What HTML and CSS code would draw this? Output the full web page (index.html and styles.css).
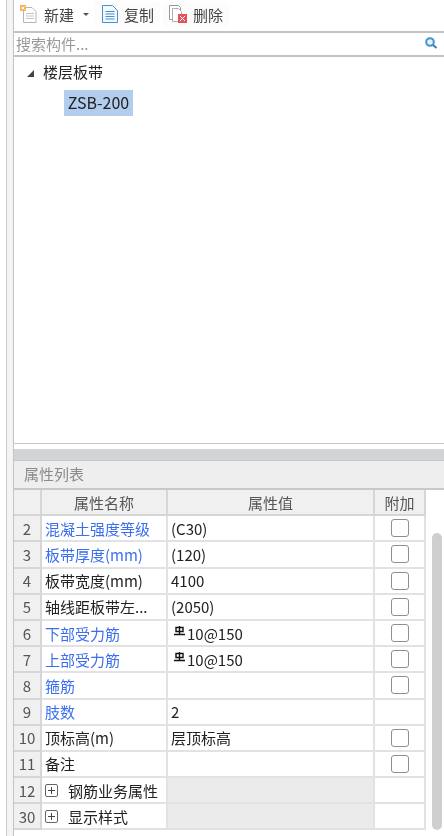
FILE: index.html
```html
<!DOCTYPE html>
<html lang="zh-CN">
<head>
    <meta charset="UTF-8">
    <title>属性列表</title>
    <link rel="stylesheet" href="styles.css">
</head>
<body>
<div class="app">
    <div class="side"></div>
    <div class="main">
        <!--工具栏-->
        <div class="toolbar">
            <div class="tool tool-new">
                <svg width="18" height="18" viewBox="0 0 18 18">
                    <path d="M3.500 2.500h8.500l4 4v11h-12.500z" fill="#fff" stroke="#b5b5b5"/>
                    <path d="M6 8.500h8M6 11h8M6 13.500h8" stroke="#c4c4c4"/>
                    <rect x="0" y="0" width="6" height="6" fill="#f7b35c"/>
                    <path d="M1.500 1.500l3 3M4.500 1.500l-3 3" stroke="#fff"/>
                </svg>
                <span>新建</span>
                <i class="caret"></i>
            </div>
            <div class="tool tool-copy">
                <svg width="16" height="18" viewBox="0 0 16 18">
                    <path d="M0.500 0.500h10l5 5v12h-15z" fill="#f3f8fd" stroke="#4a8fd0"/>
                    <path d="M3.500 6.500h9M3.500 9h9M3.500 11.500h9M3.500 14h9" stroke="#4a8fd0"/>
                </svg>
                <span>复制</span>
            </div>
            <div class="tool tool-del">
                <svg width="18" height="18" viewBox="0 0 18 18">
                    <path d="M0.500 0.500h9l2 2v12h-11z" fill="#fff" stroke="#9a9a9a"/>
                    <path d="M3.500 3.500h6l3 3v10h-9z" fill="#fff" stroke="#b0b0b0"/>
                    <rect x="9" y="9" width="9" height="9" fill="#e2545a"/>
                    <path d="M11 11l5 5M16 11l-5 5" stroke="#fff"/>
                </svg>
                <span>删除</span>
            </div>
        </div>
        <!--搜索框-->
        <div class="search">
            <span>搜索构件...</span>
            <svg width="14" height="14" viewBox="0 0 14 14">
                <circle cx="6" cy="6" r="3.800" fill="#e6f2fb" stroke="#3f94d1" stroke-width="2"/>
                <path d="M9 9l3.500 3" stroke="#3f7fb5" stroke-width="2.200"/>
            </svg>
        </div>
        <!--构件树-->
        <div class="tree">
            <div class="tree-root"><i class="arrow"></i>楼层板带</div>
            <div class="tree-leaf"><span>ZSB-200</span></div>
        </div>
        <div class="band"></div>
        <div class="panel-title">属性列表</div>
        <!--属性表-->
        <div class="table-wrap">
            <div class="grid">
                <div class="row head"><div class="no"></div><div class="name">属性名称</div><div class="val">属性值</div><div class="add">附加</div></div>
                <div class="row"><div class="no">2</div><div class="name blue">混凝土强度等级</div><div class="val">(C30)</div><div class="add"><i class="check"></i></div></div>
                <div class="row"><div class="no">3</div><div class="name blue">板带厚度(mm)</div><div class="val">(120)</div><div class="add"><i class="check"></i></div></div>
                <div class="row"><div class="no">4</div><div class="name">板带宽度(mm)</div><div class="val">4100</div><div class="add"><i class="check"></i></div></div>
                <div class="row"><div class="no">5</div><div class="name">轴线距板带左...</div><div class="val">(2050)</div><div class="add"><i class="check"></i></div></div>
                <div class="row"><div class="no">6</div><div class="name blue">下部受力筋</div><div class="val bar"><svg class="rebar" width="11" height="10" viewBox="0 0 11 10"><path d="M2 1.500h7v4h-7zM5.500 0v8.500M0 8.500h11" fill="none" stroke="#111" stroke-width="1.400"/></svg>10@150</div><div class="add"><i class="check"></i></div></div>
                <div class="row"><div class="no">7</div><div class="name blue">上部受力筋</div><div class="val bar"><svg class="rebar" width="11" height="10" viewBox="0 0 11 10"><path d="M2 1.500h7v4h-7zM5.500 0v8.500M0 8.500h11" fill="none" stroke="#111" stroke-width="1.400"/></svg>10@150</div><div class="add"><i class="check"></i></div></div>
                <div class="row"><div class="no">8</div><div class="name blue">箍筋</div><div class="val"></div><div class="add"><i class="check"></i></div></div>
                <div class="row"><div class="no">9</div><div class="name blue">肢数</div><div class="val">2</div><div class="add"></div></div>
                <div class="row"><div class="no">10</div><div class="name">顶标高(m)</div><div class="val">层顶标高</div><div class="add"><i class="check"></i></div></div>
                <div class="row"><div class="no">11</div><div class="name">备注</div><div class="val"></div><div class="add"><i class="check"></i></div></div>
                <div class="row"><div class="no">12</div><div class="name"><i class="plus"></i>钢筋业务属性</div><div class="val grey"></div><div class="add"></div></div>
                <div class="row"><div class="no">30</div><div class="name"><i class="plus"></i>显示样式</div><div class="val grey"></div><div class="add"></div></div>
            </div>
            <div class="scroll"><div class="thumb"></div></div>
        </div>
    </div>
</div>
</body>
</html>
```

FILE: styles.css
```css
* {
    margin: 0;
    padding: 0;
    box-sizing: border-box;
}

html, body {
    width: 444px;
    height: 836px;
    overflow: hidden;
    background-color: #fff;
}

body {
    font-family: "Noto Sans CJK SC", "Noto Sans", sans-serif;
    font-size: 15px;
    color: #333;
}

.app {
    display: flex;
    height: 836px;
    padding-left: 6px;
}

/*左侧窄条*/
.side {
    width: 8px;
    flex: none;
    background-color: #f4f4f4;
    border-left: 1px solid #c8c8c8;
    border-right: 1px solid #c4c4c4;
}

.main {
    flex: 1;
    min-width: 0;
    display: flex;
    flex-direction: column;
    /*原图是放大过的，文字和线条都略虚*/
    filter: blur(0.35px);
}

/*工具栏*/
.toolbar {
    height: 31px;
    display: flex;
    align-items: flex-start;
    gap: 3px;
    padding-top: 1px;
    flex: none;
}

.tool {
    display: flex;
    align-items: center;
    gap: 6px;
    height: 26px;
    color: #444;
    border-radius: 4px;
}

.tool-new {
    padding: 0 2px 0 6px;
}

.tool-copy {
    padding: 0 6px 0 8px;
    background-color: #fcfcfc;
}

.tool-del {
    padding: 0 6px;
    background-color: #fcfcfc;
}

.caret {
    width: 0;
    height: 0;
    margin-left: 3px;
    border-left: 3px solid transparent;
    border-right: 3px solid transparent;
    border-top: 3px solid #555;
}

/*搜索框*/
.search {
    height: 26px;
    flex: none;
    display: flex;
    align-items: center;
    justify-content: space-between;
    padding: 0 6px 2px 2px;
    border-top: 2px solid #c2c2c2;
    border-bottom: 2px solid #c2c2c2;
    color: #999;
}

/*构件树*/
.tree {
    height: 387px;
    flex: none;
    padding-top: 3px;
    border-bottom: 1px solid #c8c8c8;
    color: #222;
}

.tree-root {
    height: 24px;
    line-height: 24px;
    padding-left: 13px;
    display: flex;
    align-items: center;
}

.arrow {
    width: 0;
    height: 0;
    margin-right: 9px;
    margin-top: 2px;
    border-left: 7px solid transparent;
    border-bottom: 7px solid #444;
}

.tree-leaf {
    padding-left: 50px;
    margin-top: 6px;
}

.tree-leaf span {
    display: block;
    width: 69px;
    height: 26px;
    line-height: 25px;
    font-size: 16px;
    text-align: center;
    background-color: #b3cdee;
}

.band {
    height: 12px;
    flex: none;
    margin-top: 5px;
    background-color: #d2d4d8;
    border-bottom: 1px solid #c8c8c8;
}

.panel-title {
    height: 27px;
    line-height: 25px;
    flex: none;
    padding-left: 10px;
    background-color: #eee;
    color: #8a8a8a;
}

/*属性表，行距是26.2，不用table以免行高被取整*/
.table-wrap {
    flex: 1;
    display: flex;
    align-items: flex-start;
    border-top: 2px solid #c8c8c8;
}

.grid {
    width: 412px;
    flex: none;
}

.row {
    display: grid;
    grid-template-columns: 28px 126px 207px 51px;
    height: 26.2px;
    color: #222;
}

.row > div {
    display: flex;
    align-items: center;
    border-right: 2px solid #e2e2e2;
    border-bottom: 2px solid #e2e2e2;
    line-height: 20px;
    white-space: nowrap;
    overflow: hidden;
}

.row .no {
    justify-content: center;
    padding-top: 1px;
    background-color: #f0f0f0;
    border-color: #d6d6d6;
    color: #555;
}

.row .name, .row .val {
    padding-top: 1px;
    padding-left: 3px;
}

.row .add {
    justify-content: center;
}

.head > div {
    justify-content: center;
    background-color: #f0f0f0;
    border-color: #d6d6d6;
    color: #555;
}

.head .name, .head .val {
    padding-left: 0;
}

.head .add {
    padding-top: 1px;
}

.row .blue {
    color: #3c6ef0;
}

.row .grey {
    background-color: #ebebeb;
}

.row .bar {
    padding-left: 6px;
}

.rebar {
    margin-right: 2px;
    margin-bottom: 6px;
}

.check {
    display: block;
    width: 18px;
    height: 18px;
    border: 1px solid #8f8f8f;
    border-radius: 3px;
}

.plus {
    display: block;
    position: relative;
    flex: none;
    width: 13px;
    height: 13px;
    margin-right: 10px;
    border: 1px solid #666;
    border-radius: 2px;
}

.plus::before, .plus::after {
    content: "";
    position: absolute;
    background-color: #444;
}

.plus::before {
    left: 2px;
    top: 5px;
    width: 7px;
    height: 1px;
}

.plus::after {
    left: 5px;
    top: 2px;
    width: 1px;
    height: 7px;
}

/*滚动条*/
.scroll {
    flex: 1;
    padding: 43px 2px 0 6px;
}

.thumb {
    height: 297px;
    background-color: #cfcfcf;
    border-radius: 5px;
}
```
